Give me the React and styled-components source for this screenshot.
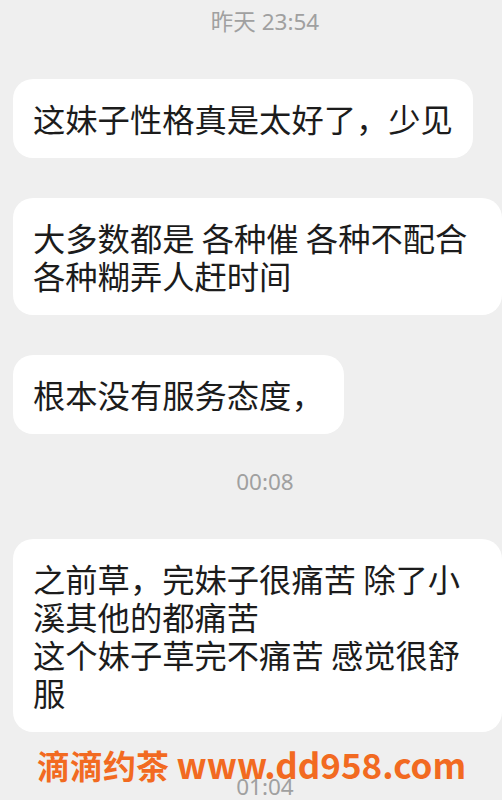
import React from "react";
import styled, { createGlobalStyle } from "styled-components";

const GlobalStyle = createGlobalStyle`
  html, body {
    margin: 0;
    padding: 0;
    background: #efefef;
  }
  body {
    font-family: "Noto Sans CJK SC", "Noto Sans", sans-serif;
  }
`;

const Screen = styled.div`
  position: relative;
  width: 502px;
  height: 800px;
  overflow: hidden;
  background: #efefef;
`;

const Thread = styled.div`
  display: flex;
  flex-direction: column;
  align-items: flex-start;
  gap: 40px;
  padding: 14px 0 0 13px;
`;

const Stamp = styled.div`
  align-self: stretch;
  margin-top: ${(props) => (props.$tight ? "2px" : "-5px")};
  margin-bottom: ${(props) => (props.$tight ? "0" : "4px")};
  padding-left: 15px;
  text-align: center;
  font-family: "Noto Sans", "Noto Sans CJK SC", sans-serif;
  font-size: 22.5px;
  line-height: 26px;
  color: #a0a0a0;
`;

const Bubble = styled.div`
  box-sizing: border-box;
  max-width: 489px;
  padding: 20px 20px 21px;
  background: #ffffff;
  border-radius: 20px;
  font-size: 32.3px;
  line-height: 38px;
  color: #1c1c1c;
  white-space: pre-line;
`;

const Watermark = styled.div`
  position: absolute;
  left: 37px;
  top: 741px;
  font-family: "Noto Sans CJK SC", "Noto Sans", sans-serif;
  font-weight: 700;
  font-size: 33px;
  line-height: 46px;
  color: #f26a21;
  white-space: nowrap;
`;

const Url = styled.span`
  font-size: 35px;
`;

const messages = [
  { type: "stamp", text: "昨天 23:54" },
  { type: "bubble", text: "这妹子性格真是太好了，少见" },
  { type: "bubble", text: "大多数都是 各种催 各种不配合 各种糊弄人赶时间" },
  { type: "bubble", text: "根本没有服务态度，" },
  { type: "stamp", text: "00:08" },
  {
    type: "bubble",
    text: "之前草，完妹子很痛苦 除了小溪其他的都痛苦\n这个妹子草完不痛苦 感觉很舒服",
  },
  { type: "stamp", text: "01:04", tight: true },
];

const App = () => (
  <>
    <GlobalStyle />
    <Screen>
      <Thread>
        {messages.map((m, i) =>
          m.type === "stamp" ? (
            <Stamp key={i} $tight={m.tight}>
              {m.text}
            </Stamp>
          ) : (
            <Bubble key={i}>{m.text}</Bubble>
          )
        )}
      </Thread>
      <Watermark>
        滴滴约茶 <Url>www.dd958.com</Url>
      </Watermark>
    </Screen>
  </>
);

export default App;
